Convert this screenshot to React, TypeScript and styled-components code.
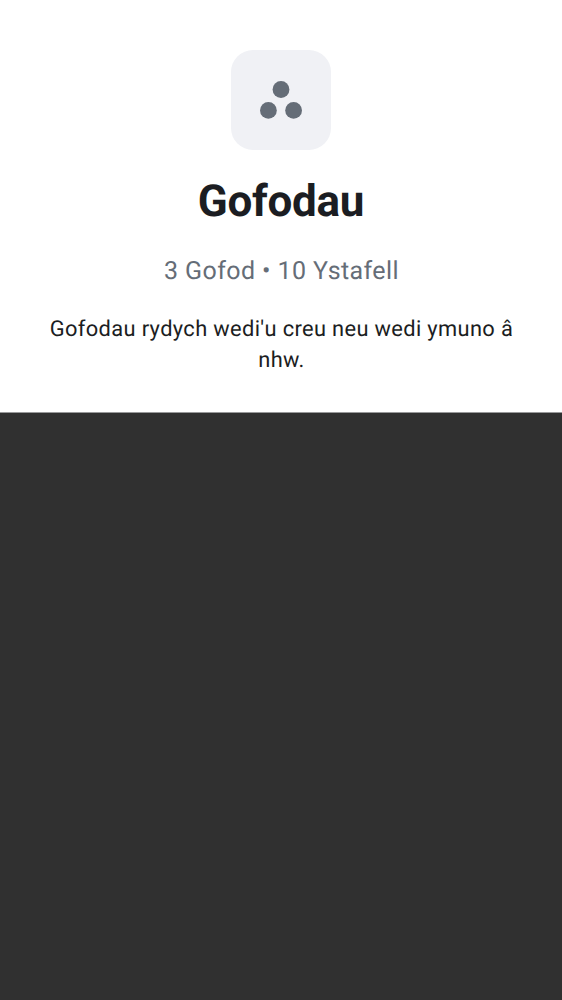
import React from 'react';
import styled, { createGlobalStyle } from 'styled-components';

const GlobalStyle = createGlobalStyle`
  * { box-sizing: border-box; }
  body { margin: 0; background: #303030; font-family: Roboto, sans-serif; text-rendering: geometricPrecision; }
`;

const Header = styled.header`
  display: flex;
  flex-direction: column;
  align-items: center;
  height: 413px;
  padding: 50px 40px 0;
  background: #fff;
  border-bottom: 1px solid #98999a;
  text-align: center;
`;

const IconTile = styled.div`
  display: flex;
  width: 100px;
  height: 100px;
  border-radius: 22px;
  background: #f0f1f5;
`;

const Title = styled.h1`
  margin: 25px 0 0;
  color: #1b1d22;
  font-size: 44px;
  font-weight: 700;
  line-height: 52px;
  letter-spacing: -0.3px;
`;

const Counts = styled.p`
  margin: 30px 0 0;
  padding-left: 1px;
  color: #656d77;
  font-size: 25px;
  line-height: 30px;
  letter-spacing: 0.4px;
`;

const Description = styled.p`
  margin: 27px 0 0;
  padding-left: 1px;
  color: #1b1d22;
  font-size: 21.85px;
  line-height: 31px;
  letter-spacing: 0.35px;
`;

export default function App() {
  return (
    <>
      <GlobalStyle />
      <Header>
        <IconTile>
          <svg width="100" height="100" viewBox="0 0 100 100" fill="#656d77" aria-hidden="true">
            <circle cx="50" cy="39.5" r="8.4" />
            <circle cx="37.4" cy="60.4" r="8.4" />
            <circle cx="62.6" cy="60.4" r="8.4" />
          </svg>
        </IconTile>
        <Title>Gofodau</Title>
        <Counts>3 Gofod • 10 Ystafell</Counts>
        <Description>Gofodau rydych wedi'u creu neu wedi ymuno â nhw.</Description>
      </Header>
    </>
  );
}
